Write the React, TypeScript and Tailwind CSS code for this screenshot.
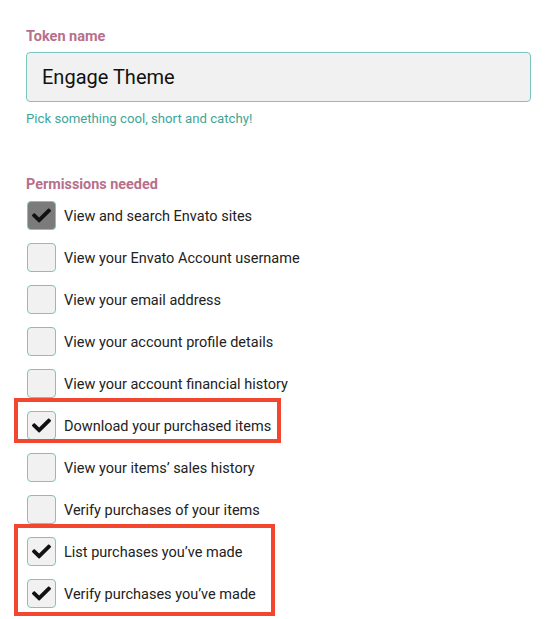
import React from "react";
import { FaCheck } from "react-icons/fa";

type Perm = { label: string; checked: boolean; locked?: boolean };

const perms: Perm[] = [
  { label: "View and search Envato sites", checked: true, locked: true },
  { label: "View your Envato Account username", checked: false },
  { label: "View your email address", checked: false },
  { label: "View your account profile details", checked: false },
  { label: "View your account financial history", checked: false },
  { label: "Download your purchased items", checked: true },
  { label: "View your items’ sales history", checked: false },
  { label: "Verify purchases of your items", checked: false },
  { label: "List purchases you’ve made", checked: true },
  { label: "Verify purchases you’ve made", checked: true },
];

function Box({ checked, locked }: { checked: boolean; locked?: boolean }) {
  return (
    <div
      className={
        "flex h-[29px] w-[29px] shrink-0 items-center justify-center rounded-[4px] border border-[#7cc5bf] " +
        (locked ? "bg-[#7b7b7b]" : "bg-[#f1f1f1]")
      }
    >
      {checked && <FaCheck className="h-[19px] w-[19px] text-[#111]" />}
    </div>
  );
}

export default function App() {
  return (
    <div
      className="relative h-[619px] w-[557px] bg-white"
      style={{ fontFamily: "Roboto, 'Noto Sans', sans-serif" }}
    >
      <div className="flex flex-col pl-[26px] pt-[28px]">
        <div className="text-[14.5px] font-bold leading-[17px] text-[#b7708c]">Token name</div>
        <div className="mt-[7px] flex h-[50px] w-[505px] items-center rounded-[4px] border border-[#7cc5bf] bg-[#f1f1f1] pl-[15px] text-[20px] text-[#111]">
          Engage Theme
        </div>
        <div className="mt-[9px] text-[13.2px] leading-[16px] text-[#3fa598]">
          Pick something cool, short and catchy!
        </div>
        <div className="mt-[49px] text-[14.4px] font-bold leading-[17px] text-[#b7708c]">
          Permissions needed
        </div>
        <div className="mt-[8px] flex flex-col gap-[13px] pl-[1px]">
          {perms.map((p) => (
            <div key={p.label} className="flex h-[29px] items-center gap-[8px]">
              <Box checked={p.checked} locked={p.locked} />
              <span className="pt-[3px] text-[14.5px] text-[#222]">{p.label}</span>
            </div>
          ))}
        </div>
      </div>
      <div className="pointer-events-none absolute left-[14px] top-[398px] h-[45px] w-[267px] border-[4px] border-[#f2462f]" />
      <div className="pointer-events-none absolute left-[14px] top-[524px] h-[92px] w-[261px] border-[4px] border-[#f2462f]" />
    </div>
  );
}
